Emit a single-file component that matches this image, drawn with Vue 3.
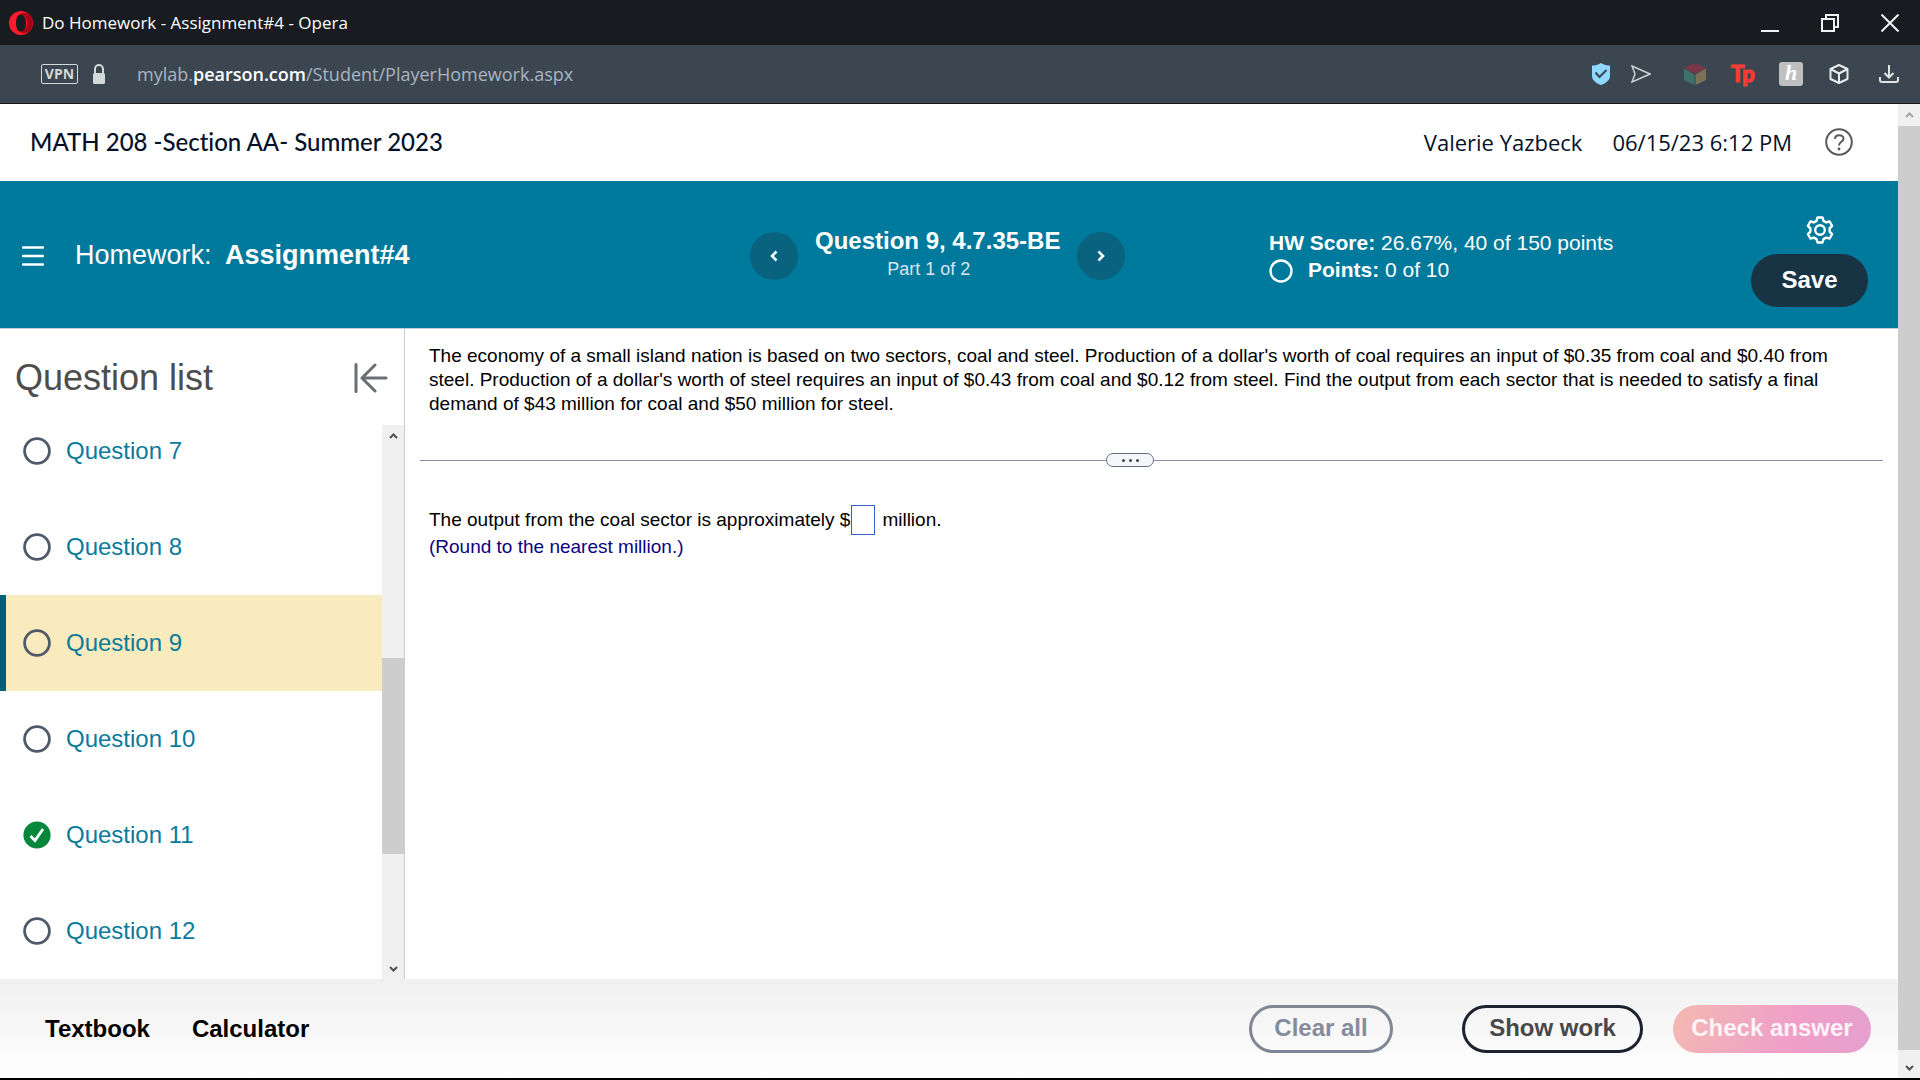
<template>
  <div class="window">
    <header class="title-bar">
      <svg class="opera" width="24" height="24" viewBox="0 0 24 24" aria-hidden="true">
        <path fill="#ff1b2d" fill-rule="evenodd" d="M12 0a12 12 0 1 0 0 24 12 12 0 0 0 0-24zm0 3.200c3.100 0 5 4 5 8.800s-1.900 8.800-5 8.800-5-4-5-8.800 1.900-8.800 5-8.800z" />
        <path fill="#a70014" d="M11 3.300C15 1 19 2 21 4.200a12 12 0 0 1 0 15.600c-2 2.200-6 3.200-10 .9 3.500.5 7-3 7-8.700s-3.500-9.200-7-8.700z" />
      </svg>
      <span class="title-text">Do Homework - Assignment#4 - Opera</span>
      <div class="window-controls">
        <button aria-label="Minimize">
          <svg width="18" height="18" viewBox="0 0 18 18"><path d="M0 17h18" /></svg>
        </button>
        <button aria-label="Restore">
          <svg width="18" height="18" viewBox="0 0 18 18"><path d="M1 5h12v12H1zM5 5V1h12v12h-4" /></svg>
        </button>
        <button aria-label="Close">
          <svg width="18" height="18" viewBox="0 0 18 18"><path d="M0.500 0.500l17 17M17.500 0.500l-17 17" /></svg>
        </button>
      </div>
    </header>

    <div class="address-bar">
      <span class="vpn">VPN</span>
      <svg class="lock" width="14" height="20" viewBox="0 0 14 20" aria-hidden="true">
        <path d="M3 10V5a4 4 0 0 1 8 0v5" fill="none" stroke="#d3d8d8" stroke-width="2" />
        <rect x="1" y="9" width="12" height="11" rx="1.500" fill="#d3d8d8" />
      </svg>
      <span class="url">mylab.<b>pearson.com</b>/Student/PlayerHomework.aspx</span>
      <div class="extensions">
        <svg class="shield" width="18" height="22" viewBox="0 0 18 22">
          <path d="M9 0c3 2 6 2.500 9 2.500V13c0 5-6 8-9 9-3-1-9-4-9-9V2.500C3 2.500 6 2 9 0z" fill="#8fd8ff" />
          <path d="M3.500 9.500l4 4.500 7-7" fill="none" stroke="#3b4550" stroke-width="2" />
        </svg>
        <svg class="send" width="20" height="18" viewBox="0 0 20 18">
          <path d="M1 1l18 8L1 17l3-8z" fill="none" stroke="#c9cfd3" stroke-width="1.500" />
        </svg>
        <svg class="cube" width="22" height="22" viewBox="0 0 22 22">
          <path d="M11 0l11 5-11 6L0 5z" fill="#7a3547" />
          <path d="M0 5.500l10.500 6V22L0 17z" fill="#3d7269" />
          <path d="M22 5.500l-10.500 6V22L22 17z" fill="#7b7257" />
        </svg>
        <span class="tp">Tp</span>
        <span class="honey">h</span>
        <svg class="box" width="20" height="20" viewBox="0 0 20 20">
          <path d="M10 1l8.500 4v10L10 19l-8.500-4V5zM1.500 5L10 9.500 18.500 5M10 9.500V19" fill="none" stroke="#e8eaec" stroke-width="2" stroke-linejoin="round" />
        </svg>
        <svg width="20" height="18" viewBox="0 0 20 18">
          <path d="M10 0v12M5.500 8l4.500 4.500L14.500 8M1 12v3q0 2 2 2h14q2 0 2-2v-3" fill="none" stroke="#e0e3e6" stroke-width="2" />
        </svg>
      </div>
    </div>

    <div class="viewport">
      <div class="page">
        <div class="course-bar">
          <span class="course">MATH 208 -Section AA- Summer 2023</span>
          <span class="user">Valerie Yazbeck</span>
          <span class="date">06/15/23 6:12 PM</span>
          <button class="help" aria-label="Help">
            <svg width="28" height="28" viewBox="0 0 28 28" fill="none" stroke="#57595a" stroke-width="2">
              <circle cx="14" cy="14" r="12.800" />
              <path d="M10 11c0-5 8.500-5 8.500-.5 0 3.500-4.500 3-4.500 7" />
              <circle cx="14" cy="21" r="1.400" fill="#57595a" stroke="none" />
            </svg>
          </button>
        </div>

        <div class="assignment-bar">
          <div class="assignment">
            <button class="menu" aria-label="Menu">
              <svg width="22" height="20" viewBox="0 0 22 20"><path d="M1 1.500h20M1 10h20M1 18.500h20" stroke="#fff" stroke-width="2.400" stroke-linecap="round" /></svg>
            </button>
            <h1>Homework: <strong>Assignment#4</strong></h1>
          </div>
          <div class="question-nav">
            <button class="arrow" aria-label="Previous question">
              <svg width="8" height="12" viewBox="0 0 8 12"><path d="M6.500 1.500L2 6l4.500 4.500" /></svg>
            </button>
            <div class="question-title">
              <strong>Question 9, 4.7.35-BE</strong>
              <span>Part 1 of 2</span>
            </div>
            <button class="arrow" aria-label="Next question">
              <svg width="8" height="12" viewBox="0 0 8 12"><path d="M1.500 1.500L6 6l-4.500 4.500" /></svg>
            </button>
          </div>
          <div class="score-area">
            <div class="scores">
              <div><b>HW Score:</b> 26.67%, 40 of 150 points</div>
              <div class="points">
                <svg width="24" height="24" viewBox="0 0 24 24"><circle cx="12" cy="12" r="10.500" fill="none" stroke="#fff" stroke-width="2.400" /></svg>
                <span><b>Points:</b> 0 of 10</span>
              </div>
            </div>
            <div class="save-area">
              <button class="gear" aria-label="Settings">
                <svg width="28" height="28" viewBox="0 0 28 28" fill="none" stroke="#fff" stroke-width="2.400" stroke-linejoin="round">
                  <path d="M11.500 1.500h5l1 3.400 2.600 1.500 3.500-.9 2.500 4.300-2.500 2.600v3.200l2.500 2.600-2.500 4.300-3.500-.9-2.600 1.500-1 3.400h-5l-1-3.400-2.600-1.500-3.500.9-2.500-4.300 2.500-2.600v-3.200L1.900 9.800l2.500-4.300 3.500.9 2.600-1.500z" />
                  <circle cx="14" cy="14" r="4.800" />
                </svg>
              </button>
              <button class="save">Save</button>
            </div>
          </div>
        </div>

        <div class="content">
          <aside class="sidebar">
            <div class="sidebar-head">
              <h2>Question list</h2>
              <button aria-label="Collapse question list">
                <svg width="34" height="30" viewBox="0 0 34 30" fill="none" stroke="#6a6f73" stroke-width="3" stroke-linecap="round">
                  <path d="M2 1.500v27M32 15H8M21 2L8 15l13 13" />
                </svg>
              </button>
            </div>
            <div class="list-area">
              <ul>
                <li v-for="q in questions" :key="q.id" :class="{ current: q.id === currentQuestion }">
                  <a href="#">
                    <svg width="28" height="28" viewBox="0 0 28 28" aria-hidden="true">
                      <template v-if="q.done">
                        <circle cx="14" cy="14" r="13.600" fill="#05873c" />
                        <path d="M7.500 15l4.500 4.500 8-11.500" fill="none" stroke="#fff" stroke-width="2.800" />
                      </template>
                      <circle v-else cx="14" cy="14" r="12.400" fill="none" stroke="#505b69" stroke-width="2.800" />
                    </svg>
                    Question {{ q.id }}
                  </a>
                </li>
              </ul>
              <div class="scrollbar" aria-hidden="true">
                <svg class="cap" viewBox="0 0 22 22"><path d="M8 13l3.500-3.500L15 13" stroke="#505050" /></svg>
                <span class="gap-before"></span>
                <span class="thumb"></span>
                <span class="gap-after"></span>
                <svg class="cap" viewBox="0 0 22 22"><path d="M8 10l3.500 3.500L15 10" stroke="#505050" /></svg>
              </div>
            </div>
          </aside>

          <main>
            <p class="problem">The economy of a small island nation is based on two sectors, coal and steel. Production of a dollar's worth of coal requires an input of $0.35 from coal and $0.40 from steel. Production of a dollar's worth of steel requires an input of $0.43 from coal and $0.12 from steel. Find the output from each sector that is needed to satisfy a final demand of $43 million for coal and $50 million for steel.</p>
            <div class="divider">
              <span class="line line-before"></span>
              <button aria-label="Resize panels"><i></i><i></i><i></i></button>
              <span class="line line-after"></span>
            </div>
            <div class="answer">
              <label for="coal">The output from the coal sector is approximately $</label>
              <input id="coal" v-model="coal" type="text" />
              <span class="unit">million.</span>
            </div>
            <p class="hint">(Round to the nearest million.)</p>
          </main>
        </div>

        <footer>
          <a href="#">Textbook</a>
          <a href="#">Calculator</a>
          <button class="clear" @click="coal = ''">Clear all</button>
          <button class="show">Show work</button>
          <button class="check">Check answer</button>
        </footer>
      </div>

      <div class="scrollbar" aria-hidden="true">
        <svg class="cap" viewBox="0 0 22 22"><path d="M8 13l3.500-3.500L15 13" stroke="#a3a3a3" /></svg>
        <span class="thumb thumb-full"></span>
        <svg class="cap" viewBox="0 0 22 22"><path d="M8 10l3.500 3.500L15 10" stroke="#505050" /></svg>
      </div>
    </div>
  </div>
</template>

<script setup>
import { ref } from 'vue';

const currentQuestion = ref(9);
const coal = ref('');

const questions = [
  { id: 7 },
  { id: 8 },
  { id: 9 },
  { id: 10 },
  { id: 11, done: true },
  { id: 12 }
];
</script>

<style>
body {
  margin: 0;
}
</style>

<style scoped>
* {
  box-sizing: border-box;
}

.window {
  display: flex;
  flex-direction: column;
  height: 100vh;
  border-bottom: 2px solid #000;
  font-family: "Liberation Sans", Arial, sans-serif;
  color: #000;
  background: #fff;
}

button {
  padding: 0;
  border: none;
  background: none;
  font-family: inherit;
  cursor: pointer;
}

svg {
  display: block;
  flex-shrink: 0;
}

a {
  text-decoration: none;
}

/* browser chrome */
.title-bar {
  display: flex;
  align-items: center;
  flex-shrink: 0;
  height: 45px;
  padding: 0 21px 0 9px;
  background: #181b20;
  color: #fff;
  font-family: "Open Sans", sans-serif;
  font-size: 17px;
}

.title-text {
  margin-left: 9px;
}

.window-controls {
  display: flex;
  gap: 42px;
  margin-left: auto;
}

.window-controls path {
  fill: none;
  stroke: #f0f2f2;
  stroke-width: 2;
}

.address-bar {
  display: flex;
  align-items: center;
  flex-shrink: 0;
  height: 59px;
  padding: 0 21px 0 41px;
  border-bottom: 1px solid #15121a;
  background: #3b4651;
  font-family: "Open Sans", sans-serif;
}

.vpn {
  width: 37px;
  height: 20px;
  border: 1px solid #d3d8d8;
  border-radius: 2px;
  color: #d3d8d8;
  font-size: 14px;
  font-weight: 700;
  line-height: 18px;
  text-align: center;
}

.lock {
  margin-left: 14px;
}

.url {
  margin-left: 31px;
  color: #aab4c0;
  font-size: 18px;
}

.url b {
  color: #fff;
  font-weight: 600;
}

.extensions {
  display: flex;
  align-items: center;
  margin-left: auto;
}

.send {
  margin: 0 33px 0 21px;
}

.tp {
  width: 24px;
  margin: 0 24px 0 25px;
  color: #f93b33;
  font-family: Lato, sans-serif;
  font-size: 22px;
  font-weight: 900;
  line-height: 24px;
  -webkit-text-stroke: 1px #f93b33;
}

.honey {
  width: 24px;
  height: 24px;
  margin-right: 26px;
  border-radius: 3px;
  background: #bfbfbf;
  color: #fff;
  font-family: "Liberation Serif", serif;
  font-size: 22px;
  font-style: italic;
  font-weight: 700;
  line-height: 22px;
  text-align: center;
}

.box {
  margin-right: 30px;
}

/* page */
.viewport {
  display: flex;
  flex: 1;
  min-height: 0;
}

.page {
  display: flex;
  flex: 1;
  flex-direction: column;
  min-width: 0;
}

.course-bar {
  display: flex;
  align-items: center;
  flex-shrink: 0;
  height: 77px;
  padding: 0 45px 2px 30px;
  color: #05112a;
  font-family: "Open Sans", sans-serif;
  font-size: 22px;
}

.course {
  margin-right: auto;
  font-family: Lato, sans-serif;
  font-size: 24px;
  font-weight: 500;
  font-variant-ligatures: none;
}

.date {
  margin: 0 33px 0 30px;
}

.assignment-bar {
  display: grid;
  grid-template-columns: 750fr 519fr 629fr;
  flex-shrink: 0;
  align-items: center;
  height: 148px;
  padding-top: 2px;
  border-bottom: 1px solid #c7cddd;
  background: #007a9c;
  color: #fff;
}

.assignment {
  display: flex;
  align-items: center;
  gap: 31px;
  padding-left: 22px;
}

h1 {
  margin: 0;
  font-size: 27px;
  font-weight: 400;
}

h1 strong {
  margin-left: 6px;
}

.question-nav {
  display: flex;
  align-items: center;
  gap: 17px;
}

.arrow {
  display: flex;
  align-items: center;
  justify-content: center;
  width: 48px;
  height: 48px;
  border-radius: 50%;
  background: #09637f;
}

.arrow path {
  fill: none;
  stroke: #fff;
  stroke-width: 2.5;
}

.question-title {
  padding-bottom: 2px;
  font-size: 24px;
  line-height: 28px;
}

.question-title span {
  display: block;
  padding-right: 18px;
  color: #d9e4f0;
  font-size: 18px;
  text-align: center;
}

.score-area {
  display: flex;
  align-items: center;
  justify-content: space-between;
  padding-right: 30px;
}

.scores {
  font-size: 21px;
  line-height: 27px;
}

.points {
  display: flex;
  gap: 15px;
}

.points svg {
  margin-top: 3px;
}

.save-area {
  display: flex;
  flex-direction: column;
  align-items: center;
  gap: 10px;
  padding-top: 12px;
}

.gear {
  margin-left: 20px;
}

.save {
  width: 117px;
  height: 53px;
  padding-bottom: 2px;
  border-radius: 27px;
  background: #173344;
  color: #fff;
  font-size: 24px;
  font-weight: 700;
}

.content {
  display: flex;
  flex: 1;
  min-height: 0;
}

.sidebar {
  display: flex;
  flex-direction: column;
  flex-shrink: 0;
  width: 405px;
  border-right: 1px solid #c7cddd;
}

.sidebar-head {
  display: flex;
  align-items: center;
  justify-content: space-between;
  flex-shrink: 0;
  height: 96px;
  padding: 2px 16px 0 15px;
}

h2 {
  margin: 0;
  color: #4d4d4d;
  font-size: 36px;
  font-weight: 400;
}

.list-area {
  display: flex;
  flex: 1;
  min-height: 0;
}

ul {
  display: flex;
  flex: 1;
  flex-direction: column;
  justify-content: flex-end;
  margin: 0;
  padding: 0;
  overflow: hidden;
  list-style: none;
}

li {
  flex-shrink: 0;
  height: 96px;
  border-left: 6px solid transparent;
}

li.current {
  border-color: #00607a;
  background: #f9ebbd;
}

li a {
  display: flex;
  align-items: center;
  gap: 15px;
  height: 100%;
  padding-left: 17px;
  color: #0b7b9c;
  font-size: 24px;
}

.scrollbar {
  display: flex;
  flex-direction: column;
  flex-shrink: 0;
  width: 22px;
  background: #f0f0f0;
}

.cap {
  height: 22px;
}

.cap path {
  fill: none;
  stroke-width: 2;
}

.thumb {
  flex: 196;
  background: #cdcdcd;
}

.thumb-full {
  margin-bottom: 6px;
}

.gap-before {
  flex: 211;
}

.gap-after {
  flex: 103;
}

main {
  flex: 1;
  min-width: 0;
  padding: 15px 15px 0;
  font-size: 19px;
  line-height: 24px;
}

.problem {
  margin: 0 15px 0 9px;
}

.divider {
  display: flex;
  align-items: center;
  height: 14px;
  margin-top: 37px;
}

.line {
  height: 1px;
  background: #8a8fa8;
}

.line-before {
  flex: 686;
}

.line-after {
  flex: 729;
}

.divider button {
  display: flex;
  align-items: center;
  justify-content: center;
  gap: 4px;
  width: 48px;
  height: 14px;
  border: 1px solid #66707f;
  border-radius: 7px;
  background: #f4f6f8;
}

.divider i {
  width: 3px;
  height: 3px;
  border-radius: 50%;
  background: #444;
}

.answer {
  display: flex;
  align-items: center;
  margin: 38px 0 0 9px;
}

.answer input {
  width: 24px;
  height: 30px;
  margin-left: 1px;
  padding: 0 2px;
  border: 1px solid #2f62cf;
  font: inherit;
}

.unit {
  margin-left: 7px;
}

.hint {
  margin: 0 0 0 9px;
  color: #0c0380;
}

footer {
  display: flex;
  align-items: center;
  flex-shrink: 0;
  height: 99px;
  padding: 0 27px 0 45px;
  background: linear-gradient(#f0f0f0, #fff);
  font-size: 24px;
  font-weight: 700;
}

footer a {
  margin-right: 42px;
  color: #000;
}

footer button {
  height: 48px;
  padding-bottom: 2px;
  border-radius: 24px;
  font-size: 24px;
  font-weight: 700;
}

.clear {
  width: 144px;
  margin-left: auto;
  border: 3px solid #7f8794;
  color: #858b9b;
}

.show {
  width: 181px;
  margin: 0 30px 0 69px;
  border: 3px solid #1c222e;
  color: #484848;
}

.check {
  width: 198px;
  background: linear-gradient(110deg, #f3b9b1, #ef9fc8 60%, #e5a0cd);
  color: #fdf3f8;
}
</style>
